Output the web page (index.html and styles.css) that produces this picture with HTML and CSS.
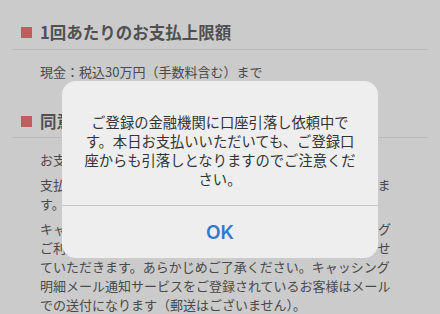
FILE: index.html
```html
<!DOCTYPE html>
<html lang="ja">
<head>
<meta charset="utf-8">
<link rel="stylesheet" href="styles.css">
</head>
<body>
<div class="page">
  <section class="section">
    <h2 class="heading"><span class="mark"></span>1回あたりのお支払上限額</h2>
    <div class="content first-content">
      <p class="text">現金：税込30万円（手数料含む）まで</p>
    </div>
  </section>
  <section class="section second">
    <h2 class="heading"><span class="mark"></span>同意事項</h2>
    <div class="content">
      <p class="text">お支払い前に以下の内容をご確認ください。</p>
      <p class="text">支払手続き完了の時点で、キャッシングのご利用が確定します。</p>
      <p class="text">キャッシングのお取引内容は、後日にまとめてキャッシングご利用明細書を、ご登録のご住所宛てに郵送にてお送りさせていただきます。あらかじめご了承ください。キャッシング明細メール通知サービスをご登録されているお客様はメールでの送付になります（郵送はございません）。</p>
    </div>
  </section>
</div>
<div class="dialog">
  <p class="message">ご登録の金融機関に口座引落し依頼中です。本日お支払いいただいても、ご登録口座からも引落しとなりますのでご注意ください。</p>
  <div class="actions"><span class="ok">OK</span></div>
</div>
</body>
</html>
```
FILE: styles.css
```css
* { box-sizing: border-box; }
html, body {
  margin: 0;
  padding: 0;
  background: #cbcbcb;
  width: 440px;
  height: 314px;
  overflow: hidden;
  font-family: "Noto Sans CJK JP", "Noto Sans", sans-serif;
  color: #4a4a4a;
}
.page {
  padding-top: 20px;
}
.heading {
  margin: 0 12px;
  padding: 0 0 5px 9px;
  display: flex;
  align-items: center;
  gap: 8px;
  font-size: 16.5px;
  line-height: 24px;
  font-weight: 700;
  color: #505050;
  border-bottom: 1px solid #b9b9b9;
}
.second .heading {
  padding-bottom: 4px;
}
.mark {
  width: 11px;
  height: 11px;
  background: #c05c5c;
  flex: none;
}
.content {
  display: flex;
  flex-direction: column;
  gap: 6px;
  padding: 12px 48px 0 40px;
}
.first-content {
  padding-top: 12px;
}
.text {
  margin: 0;
  font-size: 13px;
  line-height: 19px;
}
.second {
  margin-top: 28px;
}
.dialog {
  position: absolute;
  left: 62px;
  top: 81px;
  width: 316px;
  height: 177px;
  background: #eeeeee;
  border-radius: 14px;
  display: flex;
  flex-direction: column;
}
.message {
  margin: 0;
  padding: 31px 22px 0;
  height: 125px;
  font-size: 14.3px;
  line-height: 19px;
  text-align: center;
  color: #333333;
  border-bottom: 1px solid #c6c6c6;
}
.actions {
  flex: 1;
  display: flex;
  align-items: center;
  justify-content: center;
}
.ok {
  font-family: Inter, "Noto Sans", sans-serif;
  font-weight: 600;
  font-size: 19px;
  color: #3478d2;
}
```
